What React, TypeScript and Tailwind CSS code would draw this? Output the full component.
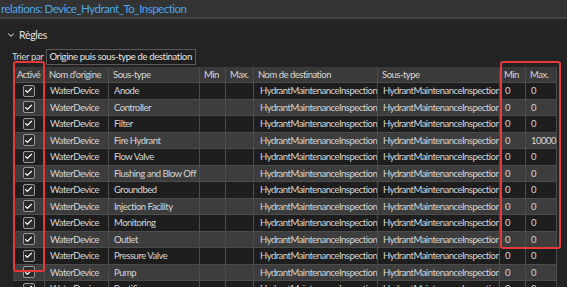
import { Check, ChevronDown } from "lucide-react";

const cols = "grid-cols-[32px_64px_91px_26px_28px_124px_122px_26px_31px]";

const rows = [
  { sub: "Anode", max: "0" },
  { sub: "Controller", max: "0" },
  { sub: "Filter", max: "0" },
  { sub: "Fire Hydrant", max: "10000" },
  { sub: "Flow Valve", max: "0" },
  { sub: "Flushing and Blow Off", max: "0" },
  { sub: "Groundbed", max: "0" },
  { sub: "Injection Facility", max: "0" },
  { sub: "Monitoring", max: "0" },
  { sub: "Outlet", max: "0" },
  { sub: "Pressure Valve", max: "0" },
  { sub: "Pump", max: "0" },
  { sub: "Rectifier", max: "0" },
];

function Box() {
  return (
    <div className="w-[12px] h-[12px] rounded-[2px] border border-[#9a9a9a] bg-[#2a2a2a] flex items-center justify-center">
      <Check size={9} strokeWidth={3} className="text-white" />
    </div>
  );
}

function App() {
  const headers = ["Activé", "Nom d'origine", "Sous-type", "Min", "Max.", "Nom de destination", "Sous-type", "Min", "Max."];
  return (
    <div
      className="w-[567px] h-[287px] overflow-hidden bg-[#232323] text-[#d6d6d6] relative"
      style={{ fontFamily: 'Lato, "Noto Sans", sans-serif' }}
    >
      <div className="h-[19px] bg-[#333333] border-b-2 border-[#444444] flex items-center pl-px text-[11.5px] tracking-[-0.5px] text-[#4ea6ea] leading-none whitespace-nowrap">
        relations: Device_Hydrant_To_Inspection
      </div>
      <div className="flex items-center gap-[3px] pl-[6px] mt-[8px] h-[16px] text-[10.5px] tracking-[-0.3px] text-[#e0e0e0] leading-none">
        <ChevronDown size={10} strokeWidth={2.5} className="text-[#cfcfcf]" />
        <span>Règles</span>
      </div>
      <div className="flex items-center gap-[3px] pl-[12px] mt-[6px] h-[16px] text-[9.5px] tracking-[-0.35px] leading-none whitespace-nowrap">
        <span>Trier par</span>
        <div className="w-[150px] h-[16px] border border-[#5a5a5a] bg-[#1e1e1e] flex items-center justify-between px-[2px]">
          <span className="text-[#e6e6e6]">Origine puis sous-type de destination</span>
          <ChevronDown size={9} strokeWidth={2.5} className="text-[#bbbbbb]" />
        </div>
      </div>
      <div className="ml-[13px] mt-[2px] w-[544px] text-[9.5px] tracking-[-0.5px] leading-none">
        <div className={`grid ${cols} h-[16px] bg-[#3a3a3a]`}>
          {headers.map((h, i) => (
            <div key={i} className="flex items-center px-[4px] border-r border-b border-[#4c4c4c] text-[#d8d8d8] whitespace-nowrap overflow-hidden">
              {h}
            </div>
          ))}
        </div>
        {rows.map((r, i) => (
          <div key={i} className={`grid ${cols} h-[16.5px] ${i % 2 ? "bg-[#3d3d3d]" : "bg-[#1e1e1e]"}`}>
            <div className="flex items-center justify-center border-r border-b border-[#4c4c4c]">
              <Box />
            </div>
            <div className="flex items-center px-[5px] border-r border-b border-[#4c4c4c] whitespace-nowrap overflow-hidden">WaterDevice</div>
            <div className="flex items-center px-[5px] border-r border-b border-[#4c4c4c] whitespace-nowrap overflow-hidden">{r.sub}</div>
            <div className="border-r border-b border-[#4c4c4c]" />
            <div className="border-r border-b border-[#4c4c4c]" />
            <div className="flex items-center px-[6px] border-r border-b border-[#4c4c4c] whitespace-nowrap overflow-hidden">HydrantMaintenanceInspection</div>
            <div className="flex items-center px-[5px] border-r border-b border-[#4c4c4c] whitespace-nowrap overflow-hidden">HydrantMaintenanceInspection</div>
            <div className="flex items-center px-[5px] border-r border-b border-[#4c4c4c]">0</div>
            <div className="flex items-center px-[5px] border-r border-b border-[#4c4c4c]">{r.max}</div>
          </div>
        ))}
      </div>
      <div className="absolute left-[13px] top-[61px] w-[32px] h-[211px] border-2 border-[#e8393a] rounded-[3px]" />
      <div className="absolute left-[500px] top-[61px] w-[61px] h-[188px] border-2 border-[#e8393a] rounded-[3px]" />
    </div>
  );
}

export default App;
